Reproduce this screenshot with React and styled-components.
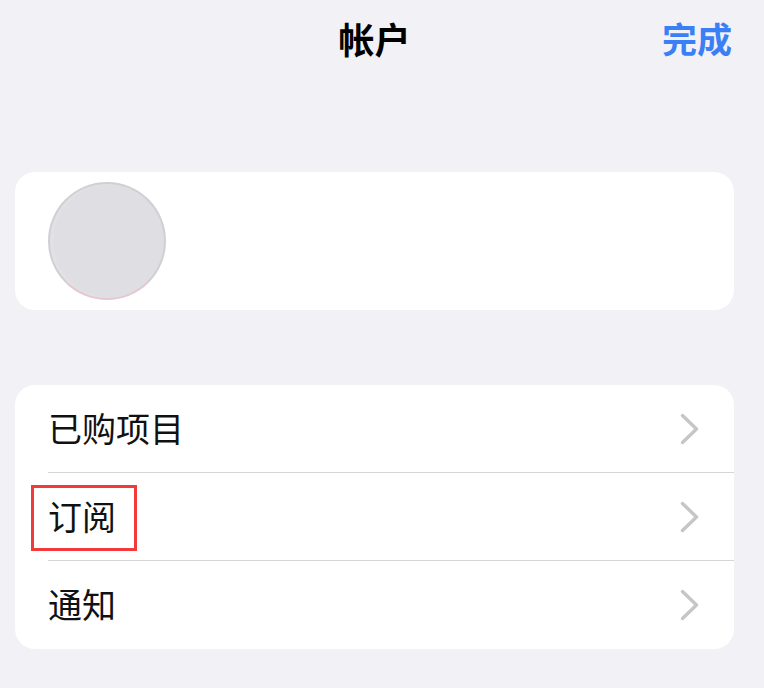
import React from "react";
import styled, { createGlobalStyle } from "styled-components";

const Global = createGlobalStyle`
  html, body { margin: 0; padding: 0; background: #f1f1f6; }
  body { font-family: "Noto Sans CJK SC", "Liberation Sans", sans-serif; }
`;

const Page = styled.div`
  width: 764px;
  height: 688px;
  overflow: hidden;
  background: #f1f1f6;
  display: flex;
  flex-direction: column;
  padding: 0 30px 0 15px;
  box-sizing: border-box;
`;

const NavBar = styled.header`
  height: 172px;
  flex: none;
  display: grid;
  grid-template-columns: 1fr auto 1fr;
  align-items: start;
  padding-top: 17px;
  box-sizing: border-box;
`;

const Title = styled.h1`
  grid-column: 2;
  margin: 0;
  font-size: 36px;
  line-height: 42px;
  font-weight: 700;
  color: #000;
`;

const Done = styled.span`
  grid-column: 3;
  justify-self: end;
  font-size: 35px;
  line-height: 42px;
  font-weight: 700;
  color: #3a7ff6;
  margin-right: 2px;
`;

const Card = styled.section`
  width: 719px;
  background: #fff;
  border-radius: 20px;
  overflow: hidden;
  flex: none;
`;

const ProfileCard = styled(Card)`
  height: 138px;
  padding: 10px 33px;
  box-sizing: border-box;
  margin-bottom: 75px;
`;

const Avatar = styled.div`
  width: 118px;
  height: 118px;
  border-radius: 50%;
  background: #dedee3;
  box-sizing: border-box;
  border: 2px solid #d0d0d4;
  border-bottom-color: #e6c8d2;
  box-shadow: inset 3px 0 2px #e2e2e6;
`;

const Row = styled.div`
  position: relative;
  height: 88px;
  display: flex;
  align-items: center;
  justify-content: space-between;
  padding: 0 34px 0 33px;
  box-sizing: border-box;
  &:not(:last-child)::after {
    content: "";
    position: absolute;
    left: 33px;
    right: 0;
    bottom: 0;
    height: 1px;
    background: #d6d6d8;
  }
`;

const Label = styled.span`
  font-size: 34px;
  line-height: 44px;
  color: #111;
  margin-bottom: 2px;
`;

const Highlight = styled.span`
  position: absolute;
  left: 16px;
  top: 12px;
  width: 106px;
  height: 66px;
  border: 3px solid #f23a3a;
  box-sizing: border-box;
`;

const Chevron = () => (
  <svg width="20" height="32" viewBox="0 0 20 32" fill="none">
    <path d="M2.5 2.5 L16.5 16 L2.5 29.5" stroke="#c6c6c9" strokeWidth="3.4" strokeLinecap="round" strokeLinejoin="round" />
  </svg>
);

const items = [
  { label: "已购项目" },
  { label: "订阅", marked: true },
  { label: "通知" },
];

export default function App() {
  return (
    <Page>
      <Global />
      <NavBar>
        <Title>帐户</Title>
        <Done>完成</Done>
      </NavBar>
      <ProfileCard>
        <Avatar />
      </ProfileCard>
      <Card>
        {items.map((item) => (
          <Row key={item.label}>
            <Label>{item.label}</Label>
            {item.marked && <Highlight />}
            <Chevron />
          </Row>
        ))}
      </Card>
    </Page>
  );
}
